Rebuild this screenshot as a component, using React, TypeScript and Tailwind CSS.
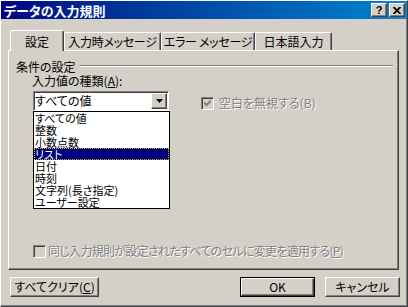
import React from 'react';

const font = "font-['Noto_Sans_CJK_JP',sans-serif] [font-feature-settings:'palt']";
const raised =
  'border border-t-white border-l-white border-r-[#404040] border-b-[#404040] shadow-[inset_-1px_-1px_#808080] bg-[#d4d0c8]';
const sunken =
  'border border-t-[#808080] border-l-[#808080] border-r-white border-b-white shadow-[inset_1px_1px_#404040]';
const disabled = 'text-[#808080] [text-shadow:1px_1px_0_#ffffff]';

const items = ['すべての値', '整数', '小数点数', 'リスト', '日付', '時刻', '文字列(長さ指定)', 'ユーザー設定'];

function CheckBox({ checked }: { checked?: boolean }) {
  return (
    <div className={`w-[13px] h-[13px] shrink-0 bg-[#d4d0c8] flex items-center justify-center ${sunken}`}>
      {checked && (
        <svg width="7" height="7" viewBox="0 0 7 7">
          <path d="M0 2.5 L2.5 5 L7 0.5" stroke="#808080" strokeWidth="2" fill="none" />
        </svg>
      )}
    </div>
  );
}

export default function App() {
  return (
    <div className={`w-[408px] h-[307px] bg-[#d4d0c8] border border-t-white border-l-white border-r-[#404040] border-b-[#404040] text-[12px] text-black ${font}`}>
      <div className="h-full flex flex-col shadow-[inset_-1px_-1px_#808080]">
        {/* title bar */}
        <div className="h-[18px] flex items-center justify-between bg-linear-to-r from-[#000080] to-[#1084d0]">
          <span className="pl-[3px] text-white font-bold text-[13px] leading-none">データの入力規則</span>
          <div className="flex gap-[2px] mr-[2px]">
            <div className={`w-[16px] h-[14px] flex items-center justify-center ${raised}`}>
              <span className="font-['Liberation_Sans',sans-serif] font-bold text-[11px] leading-none">?</span>
            </div>
            <div className={`w-[16px] h-[14px] flex items-center justify-center ${raised}`}>
              <svg width="8" height="7" viewBox="0 0 8 7">
                <path d="M0.5 0 L7.5 7 M7.5 0 L0.5 7" stroke="#000" strokeWidth="1.8" />
              </svg>
            </div>
          </div>
        </div>

        {/* tabs */}
        <div className="mt-[11px] pl-[9px] flex items-end h-[20px] relative z-10">
          <div className="w-[54px] h-[21px] -mb-[1px] bg-[#d4d0c8] border-l border-t border-r border-l-white border-t-white border-r-[#404040] shadow-[inset_-1px_0_#808080] rounded-t-[3px] text-center pt-[4px] leading-[14px]">
            設定
          </div>
          <div className="w-[97px] h-[18px] border-l border-t border-r border-l-white border-t-white border-r-[#404040] shadow-[inset_-1px_0_#808080] rounded-t-[2px] text-center pt-[2px] leading-[14px] tracking-[-0.3px]">
            入力時メッセージ
          </div>
          <div className="w-[94px] h-[18px] border-l border-t border-r border-l-white border-t-white border-r-[#404040] shadow-[inset_-1px_0_#808080] rounded-t-[2px] text-center pt-[2px] leading-[14px] tracking-[-0.3px]">
            エラー メッセージ
          </div>
          <div className="w-[77px] h-[18px] border-l border-t border-r border-l-white border-t-white border-r-[#404040] shadow-[inset_-1px_0_#808080] rounded-t-[2px] text-center pt-[2px] leading-[14px]">
            日本語入力
          </div>
        </div>

        {/* panel */}
        <div className={`ml-[7px] w-[391px] h-[220px] flex flex-col ${raised}`}>
          <div className="mt-[9px] flex items-start pl-[7px] pr-[5px] h-[14px]">
            <span className="leading-[14px]">条件の設定</span>
            <div className="flex-1 ml-[4px] mt-[5px] h-[2px] border-t border-b border-t-[#808080] border-b-white" />
          </div>
          <div className="pl-[23px] leading-[14px] h-[14px]">
            入力値の種類(<span className="underline">A</span>):
          </div>
          <div className="mt-[3px] pl-[24px] flex items-start">
            <div className={`relative w-[136px] h-[20px] bg-white flex items-center justify-between pl-[1px] pr-[1px] ${sunken}`}>
              <span className="leading-[14px]">すべての値</span>
              <div className={`w-[16px] h-[16px] flex items-center justify-center ${raised}`}>
                <svg width="7" height="4" viewBox="0 0 7 4">
                  <path d="M0 0 H7 L3.5 4 Z" fill="#000" />
                </svg>
              </div>
              <div className="absolute left-[-1px] top-[19px] w-[137px] bg-white border border-black z-20">
                {items.map((it, i) => (
                  <div
                    key={it}
                    className={`h-[12px] text-[11px] leading-[12px] pl-[1px] whitespace-nowrap ${
                      i === 3 ? 'bg-[#000080] text-white outline outline-1 outline-dotted outline-[#c0c000] -outline-offset-1' : ''
                    }`}
                  >
                    {it}
                  </div>
                ))}
              </div>
            </div>
            <div className="ml-[32px] mt-[5px] flex items-center gap-[5px] h-[14px]">
              <CheckBox checked />
              <span className={`leading-[14px] ${disabled}`}>空白を無視する(B)</span>
            </div>
          </div>
          <div className="mt-auto mb-[11px] pl-[24px] flex items-center gap-[2px] h-[14px]">
            <CheckBox />
            <span className={`leading-[14px] whitespace-nowrap tracking-[-0.7px] ${disabled}`}>
              同じ入力規則が設定されたすべてのセルに変更を適用する(<span className="underline">P</span>)
            </span>
          </div>
        </div>

        {/* buttons */}
        <div className="mt-[7px] pl-[9px] flex">
          <div className={`w-[89px] h-[20px] flex items-center justify-center leading-[14px] ${raised}`}>
            すべてクリア(<span className="underline">C</span>)
          </div>
          <div className="ml-[141px] w-[75px] h-[20px] border border-black">
            <div className={`h-full flex items-center justify-center leading-[14px] ${raised}`}>OK</div>
          </div>
          <div className={`ml-[10px] w-[75px] h-[20px] flex items-center justify-center leading-[14px] ${raised}`}>
            キャンセル
          </div>
        </div>
      </div>
    </div>
  );
}
